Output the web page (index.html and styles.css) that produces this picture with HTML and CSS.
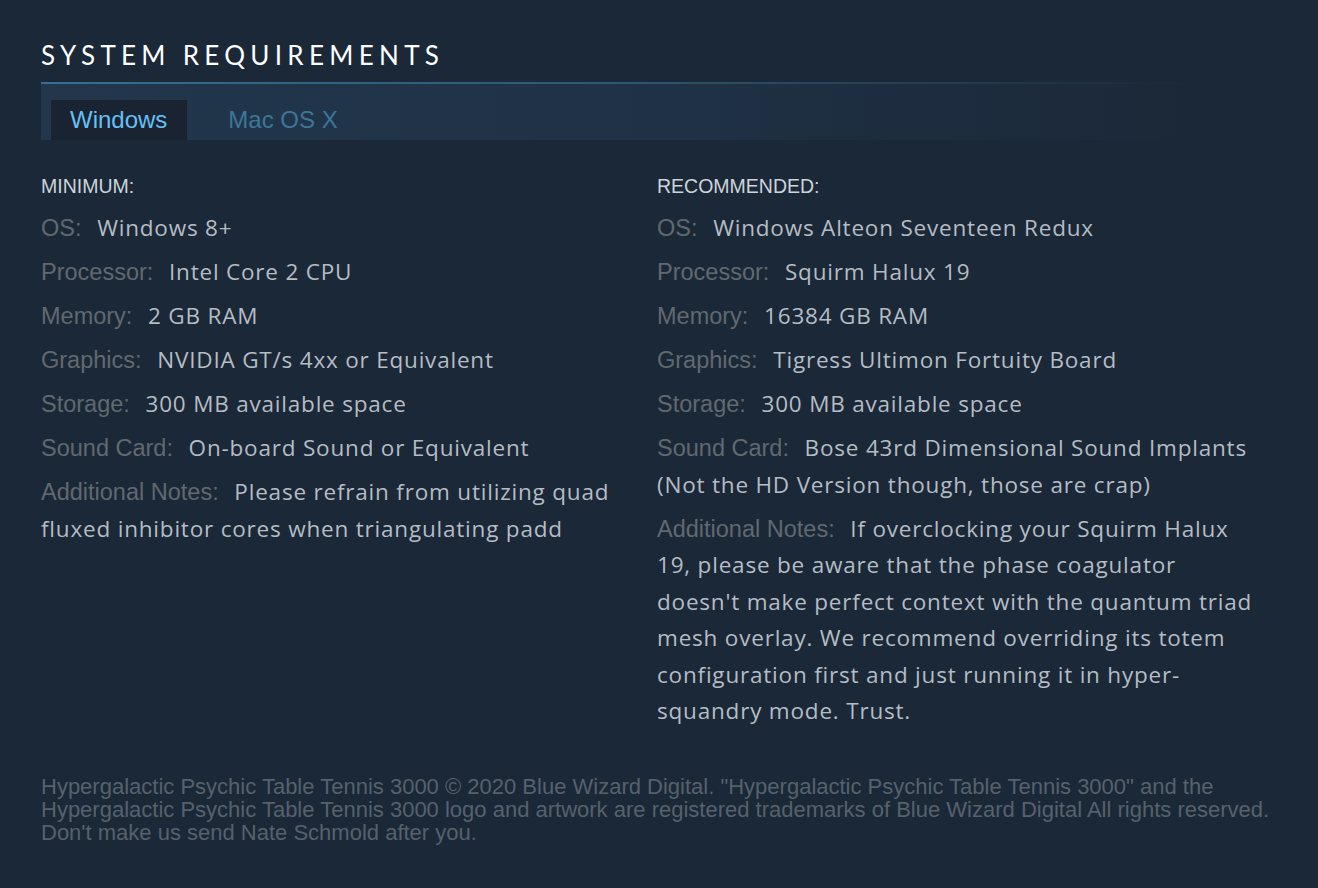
FILE: index.html
```html
<!DOCTYPE html>
<html>
<head>
<meta charset="utf-8">
<link rel="stylesheet" href="styles.css">
</head>
<body>
<div class="page">
  <h2 class="title">System Requirements</h2>
  <div class="rule"></div>
  <div class="tabs">
    <div class="tab active">Windows</div>
    <div class="tab">Mac OS X</div>
  </div>
  <div class="reqs">
    <div class="col">
      <div class="col-head">MINIMUM:</div>
      <ul class="list">
        <li><span class="lbl">OS:</span> <span class="val">Windows 8+</span></li>
        <li><span class="lbl">Processor:</span> <span class="val">Intel Core 2 CPU</span></li>
        <li><span class="lbl">Memory:</span> <span class="val">2 GB RAM</span></li>
        <li><span class="lbl">Graphics:</span> <span class="val">NVIDIA GT/s 4xx or Equivalent</span></li>
        <li><span class="lbl">Storage:</span> <span class="val">300 MB available space</span></li>
        <li><span class="lbl">Sound Card:</span> <span class="val">On-board Sound or Equivalent</span></li>
        <li><span class="lbl">Additional Notes:</span> <span class="val">Please refrain from utilizing quad fluxed inhibitor cores when triangulating padd</span></li>
      </ul>
    </div>
    <div class="col">
      <div class="col-head">RECOMMENDED:</div>
      <ul class="list">
        <li><span class="lbl">OS:</span> <span class="val">Windows Alteon Seventeen Redux</span></li>
        <li><span class="lbl">Processor:</span> <span class="val">Squirm Halux 19</span></li>
        <li><span class="lbl">Memory:</span> <span class="val">16384 GB RAM</span></li>
        <li><span class="lbl">Graphics:</span> <span class="val">Tigress Ultimon Fortuity Board</span></li>
        <li><span class="lbl">Storage:</span> <span class="val">300 MB available space</span></li>
        <li><span class="lbl">Sound Card:</span> <span class="val">Bose 43rd Dimensional Sound Implants (Not the HD Version though, those are crap)</span></li>
        <li><span class="lbl">Additional Notes:</span> <span class="val">If overclocking your Squirm Halux 19, please be aware that the phase coagulator doesn't make perfect context with the quantum triad mesh overlay. We recommend overriding its totem configuration first and just running it in hyper-squandry mode. Trust.</span></li>
      </ul>
    </div>
  </div>
  <p class="legal">Hypergalactic Psychic Table Tennis 3000 © 2020 Blue Wizard Digital. "Hypergalactic Psychic Table Tennis 3000" and the Hypergalactic Psychic Table Tennis 3000 logo and artwork are registered trademarks of Blue Wizard Digital All rights reserved. Don't make us send Nate Schmold after you.</p>
</div>
</body>
</html>
```

FILE: styles.css
```css
html, body {
  margin: 0;
  padding: 0;
  background: #1b2838;
  height: 100%;
}

.page {
  width: 1240px;
  padding: 39px 0 0 41px;
}

.title {
  margin: 0;
  font-family: Lato, "Open Sans", sans-serif;
  font-weight: 400;
  font-size: 26px;
  line-height: 32px;
  letter-spacing: 5.3px;
  text-transform: uppercase;
  color: #ffffff;
}

.rule {
  margin-top: 11px;
  height: 2px;
  width: 1150px;
  background: linear-gradient(to right, #376f92 0%, #2c5872 50%, rgba(27, 40, 56, 0) 100%);
}

.tabs {
  display: flex;
  align-items: flex-end;
  height: 56px;
  width: 1150px;
  padding-left: 10px;
  gap: 22px;
  box-sizing: border-box;
  background: linear-gradient(to right, #22374c 0%, #1f3145 55%, rgba(27, 40, 56, 0) 100%);
}

.tab {
  height: 40px;
  padding: 0 19px;
  font-family: "Liberation Sans", Arial, sans-serif;
  font-size: 24px;
  line-height: 40px;
  color: #3d7598;
}

.tab.active {
  background: #1a2331;
  color: #66c0f4;
  padding-right: 20px;
}

.reqs {
  display: flex;
  gap: 12px;
  margin-top: 34px;
}

.col {
  width: 604px;
}

.col-head {
  font-family: "Liberation Sans", Arial, sans-serif;
  font-size: 19.5px;
  line-height: 24px;
  color: #cdd4da;
  margin-bottom: 12px;
}

.list {
  list-style: none;
  margin: 0;
  padding: 0;
}

.list li {
  font-family: "Open Sans", Lato, sans-serif;
  font-size: 22.5px;
  letter-spacing: 0.8px;
  line-height: 36.5px;
  color: #b5bcc3;
  margin-bottom: 7.5px;
}

.lbl {
  font-family: "Liberation Sans", Arial, sans-serif;
  font-size: 23.5px;
  line-height: 1;
  letter-spacing: 0;
  color: #61686f;
  margin-right: 9px;
}

.legal {
  margin: 38px 0 0;
  font-family: "Liberation Sans", Arial, sans-serif;
  font-size: 22px;
  line-height: 23px;
  color: #56616c;
}
```
